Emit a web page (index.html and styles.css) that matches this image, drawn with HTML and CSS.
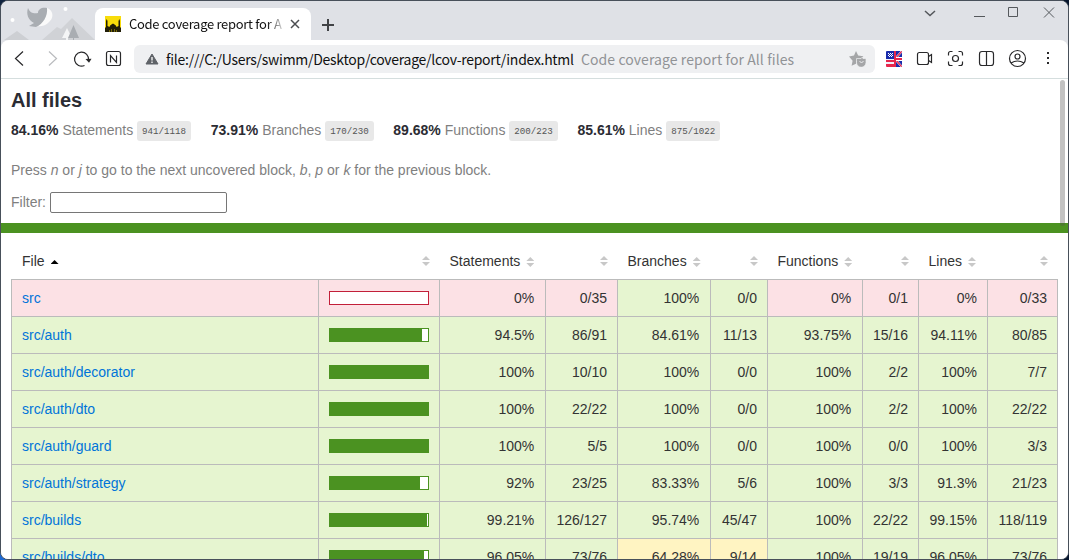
FILE: index.html
```
<!DOCTYPE html>
<html lang="en">
<head>
<meta charset="utf-8">
<title>Code coverage report for All files</title>
<link rel="stylesheet" href="styles.css">
</head>
<body>
<div class="window">
  <header class="tabstrip">
    <svg class="scenery" viewBox="1 1 94 39">
      <path fill="#cdcfd3" d="M4 40 17 31 29 40z"/>
      <path fill="#d0d2d6" d="M42 40 57 27l4 2 11-11 23 22z"/>
      <path fill="#f4f5f6" d="m67 28 5 10h-4v2h-2v-2h-4z"/>
      <path fill="#a9adb2" d="m73.500 25 5.500 13h-5v2h-1v-2h-5z"/>
      <circle cx="12.500" cy="20" r="2" fill="#fff"/><circle cx="65.500" cy="9" r="2" fill="#fff"/>
      <path fill="#fafafa" d="M47 8c6 2 7 9 3 13-4 5-10 6-16 5 8-3 12-9 13-18z"/>
      <path fill="#a9adb2" d="M28 8c2 5 6 6 10 5 0-4 4-6 9-5 1 8-4 16-11 19l-7-1 5-3c-6-3-8-9-6-15z"/>
    </svg>
    <div class="tab">
      <svg class="favicon" viewBox="0 0 16 16"><path fill="#f8dc0b" d="M0 0h16v16H0z"/><path fill="#211e08" d="M0 16v-4l1-1V5l.7-2 .8 2v5l2 1c.3-2 2-2.500 3.500-3.500C9.500 8.500 11.200 9 11.500 11l2-1V5l.8-2 .7 2v6l1 1v4z"/><path stroke="#9b8a0a" stroke-width=".7" d="M4.500 14v2M6.500 13v3M9.500 13v3M11.500 14v2"/></svg>
      <span class="tab-title">Code coverage report for All files</span>
      <svg class="tab-close" viewBox="0 0 10 10"><path d="m1 1 8 8M9 1 1 9"/></svg>
    </div>
    <svg class="new-tab" viewBox="0 0 12 12"><path d="M6 0v12M0 6h12"/></svg>
    <svg class="controls" viewBox="920 1 148 25">
      <path d="m925 11 5 4.500 5-4.500" stroke-width="1.500"/><path d="M974 16.500h11M1008.500 7.500h9v9h-9zM1044 7.500l10 10M1054 7.500l-10 10"/>
    </svg>
  </header>
  <nav class="toolbar">
    <svg class="icon back" viewBox="3 43 33 31"><path d="m23 51.500-7.500 7 7.500 7"/></svg>
    <svg class="icon forward" viewBox="36 43 31 31"><path d="m49 51.500 7.500 7-7.500 7"/></svg>
    <svg class="icon reload" viewBox="67 43 31 31"><path d="M84.500 65.500A7 7 0 1 1 88.500 60"/><path class="solid" d="m85.500 59 6-.2-2.500 4z"/></svg>
    <svg class="icon" viewBox="98 43 31 31"><rect x="106.500" y="51.500" width="14" height="14" rx="2"/><path d="M110.500 62.500v-7l6 7v-7"/></svg>
    <div class="address">
      <svg class="warning" viewBox="0 0 14 12"><path fill="#5f6368" stroke="#5f6368" stroke-linejoin="round" d="M7 1 13 11H1z"/><path stroke="#fff" stroke-width="1.300" d="M7 4v3.500M7 8.500V10"/></svg>
      <span class="url">file:///C:/Users/swimm/Desktop/coverage/lcov-report/index.html</span>
      <span class="page-name">Code coverage report for All files</span>
      <svg class="bookmark" viewBox="0 0 17 16"><path fill="#a5a6a8" d="m7 0 2.200 4.600 5.200.6-3.800 3.600.2 1H7v3l-4.400 2 1-5.100L0 5.400l5-.8z"/><path fill="#a5a6a8" stroke="#eff0f2" stroke-width=".7" d="M7.500 7.500H12l1-1 1 1h3v4a4.700 4.700 0 0 1-9.500 0z"/><path fill="none" stroke="#eff0f2" d="M10.500 10.500q2 2 4 0"/></svg>
    </div>
    <svg class="icon" viewBox="878 43 31 31" stroke="none">
      <clipPath id="flag"><rect x="886" y="51" width="16" height="16" rx="1"/></clipPath>
      <g clip-path="url(#flag)" stroke="none"><path fill="#eef0fb" d="M886 51h16v16h-16z"/><path fill="#192cab" d="M886 51h8v8h-8zM895 51h7v16h-7z"/><path fill="#e6274c" d="M886 60h8v2h-8zM886 64h8v3h-8z"/><path stroke="#fff" stroke-width="2" d="m895 59 7-8M895 59l7 8"/><path stroke="#e6274c" d="m895 59 7-8M895 59l7 8"/><path fill="#fff" d="M894 57h8v4h-8z"/><path fill="#e6274c" d="M894 51h2v16h-2zM896 58h6v2h-6z"/><path stroke="#fff" stroke-dasharray="1 1" d="M888 53.500h5M889 54.500h4M888 55.500h5M889 56.500h4"/></g>
    </svg>
    <svg class="icon" viewBox="909 43 31 31"><rect x="917.500" y="52.500" width="11" height="12" rx="2"/><path d="m928.500 56.500 3-2v8l-3-2"/></svg>
    <svg class="icon" viewBox="940 43 31 31"><path d="M948.500 55.500v-2q0-2 2-2h2M958.500 51.500h2q2 0 2 2v2M962.500 61.500v2q0 2-2 2h-2M952.500 65.500h-2q-2 0-2-2v-2"/><circle cx="955.500" cy="58.500" r="3"/></svg>
    <svg class="icon" viewBox="971 43 31 31"><rect x="979.500" y="51.500" width="14" height="14" rx="2.500"/><path d="M986.500 51.500v14"/></svg>
    <svg class="icon" viewBox="1002 43 31 31"><circle cx="1017.500" cy="58.500" r="8"/><circle cx="1017.500" cy="56.500" r="2.500"/><path d="M1011 63q6.500-4 13 0"/></svg>
    <svg class="icon" viewBox="1033 43 31 31"><path stroke-width="2" d="M1048 52v2M1048 57v2M1048 62v2"/></svg>
  </nav>
  <main class="page">
    <section class="summary">
      <h1>All files</h1>
      <div class="metrics">
        <div class="metric"><strong>84.16%</strong><span>Statements</span><code>941/1118</code></div>
        <div class="metric"><strong>73.91%</strong><span>Branches</span><code>170/230</code></div>
        <div class="metric"><strong>89.68%</strong><span>Functions</span><code>200/223</code></div>
        <div class="metric"><strong>85.61%</strong><span>Lines</span><code>875/1022</code></div>
      </div>
      <p class="hint">Press <em>n</em> or <em>j</em> to go to the next uncovered block, <em>b</em>, <em>p</em> or <em>k</em> for the previous block.</p>
      <label class="filter">Filter: <input type="text"></label>
    </section>
    <div class="status-line"></div>
    <table class="coverage">
      <colgroup><col class="c-file"><col class="c-pic"><col class="c-st"><col class="c-st-n"><col class="c-br"><col class="c-br-n"><col class="c-fn"><col class="c-fn-n"><col class="c-ln"><col class="c-ln-n"></colgroup>
      <thead><tr>
        <th>File<i class="sort asc"></i></th><th class="end"><i class="sort"></i></th>
        <th>Statements<i class="sort"></i></th><th class="end"><i class="sort"></i></th>
        <th>Branches<i class="sort"></i></th><th class="end"><i class="sort"></i></th>
        <th>Functions<i class="sort"></i></th><th class="end"><i class="sort"></i></th>
        <th>Lines<i class="sort"></i></th><th class="end"><i class="sort"></i></th>
      </tr></thead>
      <tbody>
        <tr class="low"><td><a>src</a></td><td><div class="bar"></div></td><td>0%</td><td>0/35</td><td class="high">100%</td><td class="high">0/0</td><td>0%</td><td>0/1</td><td>0%</td><td>0/33</td></tr>
        <tr><td><a>src/auth</a></td><td><div class="bar"><div class="fill" style="width:94%"></div></div></td><td>94.5%</td><td>86/91</td><td>84.61%</td><td>11/13</td><td>93.75%</td><td>15/16</td><td>94.11%</td><td>80/85</td></tr>
        <tr><td><a>src/auth/decorator</a></td><td><div class="bar"><div class="fill" style="width:100%"></div></div></td><td>100%</td><td>10/10</td><td>100%</td><td>0/0</td><td>100%</td><td>2/2</td><td>100%</td><td>7/7</td></tr>
        <tr><td><a>src/auth/dto</a></td><td><div class="bar"><div class="fill" style="width:100%"></div></div></td><td>100%</td><td>22/22</td><td>100%</td><td>0/0</td><td>100%</td><td>2/2</td><td>100%</td><td>22/22</td></tr>
        <tr><td><a>src/auth/guard</a></td><td><div class="bar"><div class="fill" style="width:100%"></div></div></td><td>100%</td><td>5/5</td><td>100%</td><td>0/0</td><td>100%</td><td>0/0</td><td>100%</td><td>3/3</td></tr>
        <tr><td><a>src/auth/strategy</a></td><td><div class="bar"><div class="fill" style="width:92%"></div></div></td><td>92%</td><td>23/25</td><td>83.33%</td><td>5/6</td><td>100%</td><td>3/3</td><td>91.3%</td><td>21/23</td></tr>
        <tr><td><a>src/builds</a></td><td><div class="bar"><div class="fill" style="width:99%"></div></div></td><td>99.21%</td><td>126/127</td><td>95.74%</td><td>45/47</td><td>100%</td><td>22/22</td><td>99.15%</td><td>118/119</td></tr>
        <tr><td><a>src/builds/dto</a></td><td><div class="bar"><div class="fill" style="width:96%"></div></div></td><td>96.05%</td><td>73/76</td><td class="medium">64.28%</td><td class="medium">9/14</td><td>100%</td><td>19/19</td><td>96.05%</td><td>73/76</td></tr>
      </tbody>
    </table>
    <div class="scrollbar"></div>
  </main>
</div>
</body>
</html>
```
FILE: styles.css
```
* { box-sizing: border-box; }
body { margin: 0; height: 560px; overflow: hidden; background: linear-gradient(90deg, #10233f 50%, #07162e 50%) top / 100% 50% no-repeat, linear-gradient(90deg, #1c69d4 50%, #07162e 50%); }
svg { display: block; flex: none; }
.window { width: 1069px; height: 560px; border: 1px solid #48505a; border-radius: 8px; overflow: hidden; background: #dfe1e6; display: flex; flex-direction: column; }
.tabstrip { height: 39px; flex: none; display: flex; background: #dfe1e6; }
.scenery { width: 94px; height: 39px; }
.tab { width: 216px; height: 32px; margin-top: 7px; border-radius: 8px 8px 0 0; background: #fff; display: flex; align-items: center; padding: 0 11px 0 10px; }
.favicon { width: 16px; height: 16px; margin-right: 8px; }
.tab-title { width: 153px; height: 20px; font: 13px/20px "Noto Sans CJK KR", "Noto Sans", sans-serif; letter-spacing: -.3px; white-space: nowrap; overflow: hidden; color: #111; mask-image: linear-gradient(90deg, #000 138px, transparent 157px); }
.tab-close { width: 10px; height: 10px; margin-left: 8px; fill: none; stroke: #4c4e51; stroke-width: 1.5; }
.new-tab { width: 12px; height: 12px; margin: 18px 0 0 11px; stroke: #414346; stroke-width: 2; }
.controls { width: 148px; height: 25px; margin-left: auto; fill: none; stroke: #55585c; stroke-width: 1; }
.toolbar { height: 39px; flex: none; display: flex; align-items: center; padding: 0 4px 1px 2px; background: #fff; border-bottom: 1px solid #d5dede; border-radius: 8px 8px 0 0; }
.icon { width: 31px; height: 31px; fill: none; stroke: #29292b; stroke-width: 1.2; }
.back { width: 33px; }
.forward { stroke: #b9bbbe; }
.solid { fill: #29292b; stroke: none; }
.address { width: 741px; height: 28px; margin: 0 3px 0 5px; padding: 0 9px 0 11px; border-radius: 6px; background: #eff0f2; display: flex; align-items: center; font: 14px/28px "Noto Sans CJK KR", "Noto Sans", sans-serif; white-space: nowrap; }
.warning { width: 14px; height: 12px; margin-right: 7px; }
.url { width: 408px; margin-right: 7px; color: #111; letter-spacing: -.27px; }
.page-name { color: #919396; letter-spacing: .08px; }
.bookmark { width: 17px; height: 16px; margin-left: auto; }
.page { position: relative; flex: 1; min-height: 0; overflow: hidden; background: #fff; color: #333; font: 14px/20px "Liberation Sans", Arial, sans-serif; }
.summary { padding: 11px 10px 10px; }
h1 { margin: 0 0 11px; font-size: 20px; line-height: 20px; color: #2b2c33; }
.metrics { display: flex; gap: 19.7px; height: 20px; }
.metric { display: flex; gap: 3.9px; line-height: 19px; }
.metric strong { color: #2b2c33; }
.metric span, .hint, .filter { color: #7f7f7f; }
.metric code { height: 20px; padding: 0 5px; border-radius: 3px; background: #e8e8e8; color: #555; font: 9.17px/21px "Liberation Mono", monospace; }
.hint { margin: 19px 0 12px; }
.filter { display: flex; gap: 4px; height: 21px; }
.filter input { width: 177px; height: 21px; border: 1px solid #767676; border-radius: 2px; background: #fff; }
.status-line { height: 10px; background: #4b9221; }
.coverage { table-layout: fixed; width: 1047px; margin: 10px 0 0 10px; border-collapse: separate; border-spacing: 0; }
.c-file { width: 308px; }
.c-pic { width: 121px; }
.c-st { width: 106px; }
.c-st-n { width: 72px; }
.c-br { width: 93px; }
.c-br-n { width: 57px; }
.c-fn { width: 95px; }
.c-fn-n { width: 56px; }
.c-ln { width: 69px; }
.c-ln-n { width: 70px; }
th { height: 37px; padding: 0 9.5px; border-bottom: 1px solid #bbb; font-weight: normal; text-align: left; white-space: nowrap; }
th:first-child { padding-left: 11px; }
.end { text-align: right; padding-right: 10px; }
.sort { display: inline-block; width: 8px; height: 10px; margin-left: 6px; vertical-align: -1px; background: #c8c8c8; clip-path: polygon(50% 0, 100% 40%, 0 40%, 0 60%, 100% 60%, 50% 100%, 0 60%, 0 40%); }
.end .sort { vertical-align: 0; }
.asc { background: #000; clip-path: polygon(50% 30%, 100% 70%, 0 70%); }
td { height: 37px; padding: 0 10px; text-align: right; white-space: nowrap; border: solid #bbb; border-width: 0 1px 1px 0; background: #e6f5d0; }
td:first-child { border-left-width: 1px; text-align: left; }
td:nth-child(3), td:nth-child(5), td:nth-child(7) { padding-right: 10.7px; }
.low td { background: #fce1e5; }
.low .high { background: #e6f5d0; }
.coverage .medium { background: #fff4c2; }
td a { color: #0074d9; }
.bar { width: 100px; height: 14px; border: 1px solid #4b9221; background: #fff; }
.low .bar { border-color: #c21f39; }
.fill { height: 100%; background: #4b9221; }
.scrollbar { position: absolute; top: 1px; right: 3px; width: 5px; height: 146px; border-radius: 3px; background: rgba(80, 80, 80, .35); }
```
